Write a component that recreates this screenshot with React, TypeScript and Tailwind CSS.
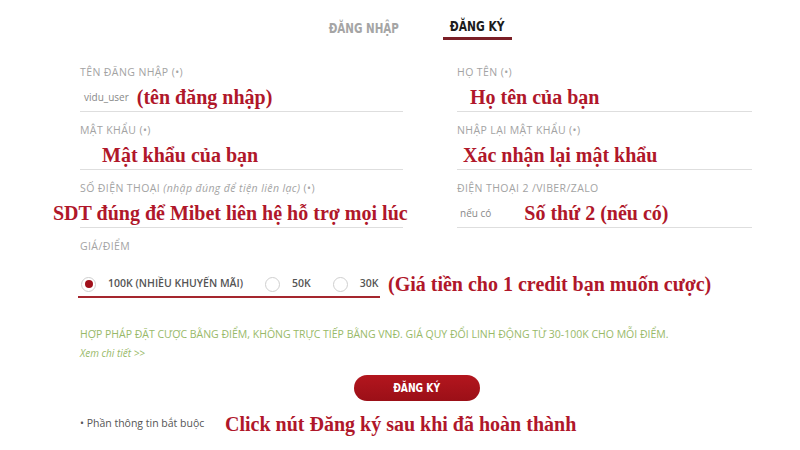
const labelCls = "text-[10.5px] leading-[12px] tracking-[0.4px] uppercase text-[#a3a3a3] [font-family:'Open_Sans',Roboto,sans-serif]"
const noteCls = "text-[20px] leading-[22px] font-bold text-[#b0172a] [font-family:'Liberation_Serif',serif]"
const condensed = "[font-family:'DejaVu_Sans_Condensed','Liberation_Sans',sans-serif] font-bold"
const smallSans = "[font-family:'Open_Sans',Roboto,sans-serif]"

function Field({
  label,
  children,
}: {
  label: React.ReactNode
  children: React.ReactNode
}) {
  return (
    <div className="mb-[12px]">
      <div className={labelCls}>{label}</div>
      <div className="flex h-[34px] items-center border-b border-[#dedede] pt-[5px]">{children}</div>
    </div>
  )
}

function Radio({ checked, label }: { checked?: boolean; label: string }) {
  return (
    <div className="flex items-center gap-[12px]">
      <span className="flex h-[15px] w-[15px] items-center justify-center rounded-full border border-[#cfcfcf] bg-white">
        {checked && <span className="h-[8px] w-[8px] rounded-full bg-[#a0101a]" />}
      </span>
      <span className={`text-[10.5px] font-semibold uppercase text-[#555] ${smallSans}`}>{label}</span>
    </div>
  )
}

export default function App() {
  return (
    <div className="h-[450px] w-[800px] overflow-hidden bg-white">
      {/* tabs */}
      <div className="ml-[330px] flex items-end gap-[45px] pt-[18px]">
        <div className="flex w-[68px] justify-center pb-[4px]">
          <span className={`inline-block scale-x-[0.82] whitespace-nowrap text-[14px] leading-[16px] text-[#a5a5a5] ${condensed}`}>
            ĐĂNG NHẬP
          </span>
        </div>
        <div className="flex w-[69px] justify-center border-b-[3px] border-[#7b1f26] pb-[3px]">
          <span className={`inline-block scale-x-[0.85] whitespace-nowrap text-[14px] leading-[16px] text-[#1c1c1c] ${condensed}`}>
            ĐĂNG KÝ
          </span>
        </div>
      </div>

      <div className="ml-[80px] mt-[26px] grid grid-cols-[323px_295px] gap-x-[54px]">
        <Field label="Tên đăng nhập (•)">
          <span className={`ml-[4px] text-[10px] text-[#888] ${smallSans}`}>vidu_user</span>
          <span className={`ml-[8px] ${noteCls}`}>(tên đăng nhập)</span>
        </Field>
        <Field label="Họ tên (•)">
          <span className={`ml-[13px] ${noteCls}`}>Họ tên của bạn</span>
        </Field>

        <Field label="Mật khẩu (•)">
          <span className={`ml-[22px] ${noteCls}`}>Mật khẩu của bạn</span>
        </Field>
        <Field label="Nhập lại mật khẩu (•)">
          <span className={`ml-[6px] ${noteCls}`}>Xác nhận lại mật khẩu</span>
        </Field>

        <Field
          label={
            <>
              Số điện thoại <span className="normal-case italic">(nhập đúng để tiện liên lạc)</span> (•)
            </>
          }
        >
          <span className={`-ml-[27px] whitespace-nowrap ${noteCls}`}>SDT đúng để Mibet liên hệ hỗ trợ mọi lúc</span>
        </Field>
        <Field label="Điện thoại 2 /viber/zalo">
          <span className={`ml-[3px] text-[10px] text-[#888] ${smallSans}`}>nếu có</span>
          <span className={`ml-[33px] ${noteCls}`}>Số thứ 2 (nếu có)</span>
        </Field>
      </div>

      <div className="ml-[80px]">
        <div className={labelCls}>Giá/Điểm</div>
        <div className="mt-[22px] flex items-center">
          <div className="-ml-[2px] flex h-[24px] w-[302px] items-center gap-[22px] border-b-2 border-[#a5262e] pb-[2px] pl-[3px]">
            <Radio checked label="100K (Nhiều khuyến mãi)" />
            <Radio label="50K" />
            <Radio label="30K" />
          </div>
          <span className={`-mt-[4px] ml-[8px] whitespace-nowrap ${noteCls}`}>(Giá tiền cho 1 credit bạn muốn cược)</span>
        </div>

        <p className={`mt-[30px] whitespace-nowrap text-[10.5px] leading-[12px] uppercase text-[#98b968] ${smallSans}`}>
          Hợp pháp đặt cược bằng điểm, không trực tiếp bằng VNĐ. Giá quy đổi linh động từ 30-100K cho mỗi điểm.
        </p>
        <p className={`mt-[7px] text-[10px] leading-[12px] italic text-[#98b968] ${smallSans}`}>Xem chi tiết &gt;&gt;</p>

        <button
          className="ml-[274px] mt-[16px] flex h-[26px] w-[126px] items-center justify-center rounded-full bg-gradient-to-b from-[#b3161e] to-[#9b0f17]"
        >
          <span className={`inline-block scale-x-[0.85] text-[12px] text-white ${condensed}`}>ĐĂNG KÝ</span>
        </button>

        <div className="mt-[12px] flex items-center">
          <span className={`w-[145px] text-[10.5px] text-[#555] ${smallSans}`}>• Phần thông tin bắt buộc</span>
          <span className={noteCls}>Click nút Đăng ký sau khi đã hoàn thành</span>
        </div>
      </div>
    </div>
  )
}
